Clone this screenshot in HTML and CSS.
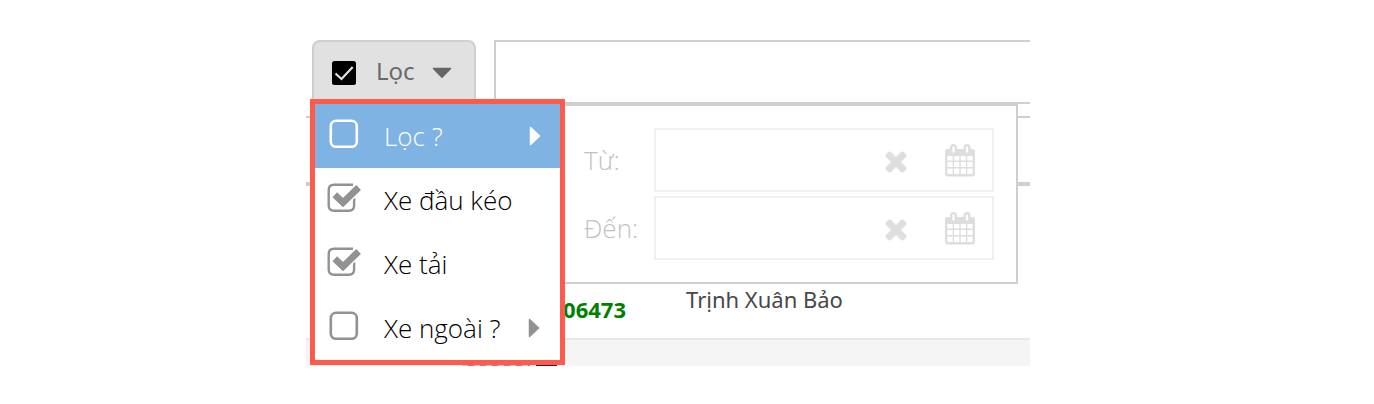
FILE: index.html
```html
<!DOCTYPE html>
<html lang="vi">
<head>
<meta charset="utf-8">
<title>Lọc</title>
<link rel="stylesheet" href="styles.css">
</head>
<body>
<svg class="defs" width="0" height="0">
  <symbol id="box" viewBox="0 0 34 32"><rect x="3.8" y="2.8" width="26" height="26" rx="5.2" fill="none" stroke="currentColor" stroke-width="2.6"/></symbol>
  <symbol id="checked" viewBox="0 0 34 32">
    <path d="M26 2.8H7Q1.7 2.8 1.7 8V23.6Q1.7 28.8 7 28.8H21.9Q27.1 28.8 27.1 23.6V16" fill="none" stroke="currentColor" stroke-width="2.4"/>
    <path d="M7 13L16 21.500L33 4.500" fill="none" stroke="#fff" stroke-width="9"/>
    <path d="M7.800 12.800L16 20.600L31.6 5.500" fill="none" stroke="currentColor" stroke-width="6.800"/>
  </symbol>
  <symbol id="cross" viewBox="0 0 22 22"><path d="M2.800 2.800L19.200 19.200M19.200 2.800L2.800 19.200" stroke="currentColor" stroke-width="7"/><path d="M4 4L18 18M18 4L4 18" stroke="currentColor" stroke-width="5" stroke-linecap="square"/></symbol>
  <symbol id="calendar" viewBox="0 0 30 33">
    <path fill="currentColor" fill-rule="evenodd" d="M2.5 5H5V3.5Q5 0 8.5 0T12 3.5V5H18.5V3.5Q18.5 0 22 0T25.500 3.500V5H27.500Q30 5 30 7.500V30Q30 32.500 27.500 32.500H2.500Q0 32.500 0 30V7.500Q0 5 2.500 5ZM7.400 2.500V8.600H9.600V2.500ZM20.900 2.500V8.600H23.100V2.500ZM2.300 12V16.600H7.700V12ZM9 12V16.600H14.400V12ZM15.700 12V16.600H21V12ZM22.300 12V16.600H27.600V12ZM2.300 18V23H7.700V18ZM9 18V23H14.400V18ZM15.700 18V23H21V18ZM22.300 18V23H27.600V18ZM2.300 24.400V30H7.700V24.400ZM9 24.400V30H14.400V24.400ZM15.700 24.400V30H21V24.400ZM22.300 24.400V30H27.600V24.400Z"/>
  </symbol>
  <symbol id="right" viewBox="0 0 12 20"><path d="M1.500 1.500V18.500L10.500 10Z" fill="currentColor" stroke="currentColor" stroke-width="1.500" stroke-linejoin="round"/></symbol>
</svg>
<main class="app">
  <div class="toolbar">
    <button class="filter">
      <svg class="tick" width="24" height="24" viewBox="0 0 24 24"><rect width="24" height="24" rx="2.500"/><path d="M3.500 12.500L9.500 18L20.700 6" fill="none" stroke="#e1e1e1" stroke-width="2.200"/></svg>
      <span class="filter-text">Lọc</span>
      <svg class="caret" width="20" height="12" viewBox="0 0 20 12"><path d="M1.500 1.500H18.500L10 10.300Z" fill="#666" stroke="#666" stroke-width="1.500" stroke-linejoin="round"/></svg>
    </button>
    <div class="search"></div>
  </div>
  <div class="header"></div>
  <div class="row"><span class="plate">-06473</span><span class="driver">Trịnh Xuân Bảo</span></div>
  <div class="row-alt"><span class="mark"></span><span class="mark-dark"></span></div>

  <section class="dates">
    <div class="date"><span class="date-label">Từ:</span><div class="field"><svg class="cross"><use href="#cross"/></svg><svg class="calendar"><use href="#calendar"/></svg></div></div>
    <div class="date"><span class="date-label">Đến:</span><div class="field"><svg class="cross"><use href="#cross"/></svg><svg class="calendar"><use href="#calendar"/></svg></div></div>
  </section>

  <div class="menu">
    <div class="item active"><svg class="check"><use href="#box"/></svg><span class="item-text">Lọc ?</span><svg class="arrow"><use href="#right"/></svg></div>
    <div class="item"><svg class="check"><use href="#checked"/></svg><span class="item-text">Xe đầu kéo</span></div>
    <div class="item"><svg class="check"><use href="#checked"/></svg><span class="item-text">Xe tải</span></div>
    <div class="item"><svg class="check"><use href="#box"/></svg><span class="item-text">Xe ngoài ?</span><svg class="arrow"><use href="#right"/></svg></div>
  </div>
</main>
</body>
</html>
```

FILE: styles.css
```css
* { box-sizing: border-box; }
body { margin: 0; background: #fff; font-family: "Open Sans", sans-serif; }
.defs { display: block; height: 0; }
svg { display: block; flex: none; }
.app { position: relative; width: 724px; height: 366px; margin-left: 306px; padding-top: 40px; overflow: hidden; }
.toolbar { display: flex; gap: 18px; height: 64px; padding-left: 6px; }
.filter { display: flex; align-items: center; width: 164px; height: 64px; padding: 0 0 0 18px; border: 2px solid #cfcfcf; border-radius: 8px 8px 0 0; background: #e1e1e1; font: 400 24px/32px "Noto Sans", sans-serif; color: #6a6a6a; }
.tick { margin-top: 1px; }
.caret { margin-top: 2px; }
.filter-text { width: 56px; margin: -2px 0 0 20px; text-align: left; }
.search { flex: 1; border: 2px solid #cfcfcf; border-right: 0; }
.header { height: 70px; margin-top: 12px; border-top: 2px solid #cfcfcf; border-bottom: 4px solid #cfcfcf; }
.row { display: flex; height: 152px; padding-top: 97px; font: 400 22px/32px "Noto Sans", sans-serif; color: #484848; }
.plate { width: 130px; margin-left: 250px; padding-top: 10px; font-family: "Open Sans", sans-serif; font-weight: 700; color: #008000; }
.driver { white-space: nowrap; }
.row-alt { display: flex; align-items: flex-end; height: 28px; padding-left: 156px; border-top: 2px solid #e8e8e8; background: #f5f5f5; }
.mark { width: 68px; height: 5px; margin-right: 6px; background: repeating-linear-gradient(90deg, #cdbfc0 0 6px, #e06a70 6px 12px); }
.mark-dark { width: 21px; height: 5px; background: #5d0c10; }

.dates { position: absolute; left: 254px; top: 104px; width: 458px; height: 180px; padding: 22px 22px 22px 24px; border: 2px solid #cfcfcf; border-left: 0; background: #fff; }
.date { display: flex; align-items: center; height: 64px; margin-bottom: 4px; }
.date-label { width: 70px; font-size: 26px; font-weight: 300; color: #c2c2c2; }
.field { display: flex; align-items: center; width: 340px; height: 64px; padding-left: 229px; border: 2px solid #f0f0f0; color: #dedede; }
.cross { width: 22px; height: 22px; margin-top: 3px; }
.calendar { width: 30px; height: 33px; margin-left: 38px; }

.menu { position: absolute; left: 4px; top: 99px; width: 255px; height: 266px; border: 5px solid #ff5a4b; background: #fff; }
.item { display: flex; align-items: center; height: 64px; padding-left: 12px; font-size: 26px; line-height: 36px; font-weight: 300; color: #000; }
.check { width: 34px; height: 32px; margin-top: -4px; color: #929292; }
.item-text { width: 144px; margin-left: 23px; white-space: nowrap; }
.arrow { width: 12px; height: 20px; color: #929292; }
.active { color: #fff; background: #7fb3e3; }
.active .check { color: #fff; }
.active .arrow { margin-left: 1px; color: #fff; }
```
